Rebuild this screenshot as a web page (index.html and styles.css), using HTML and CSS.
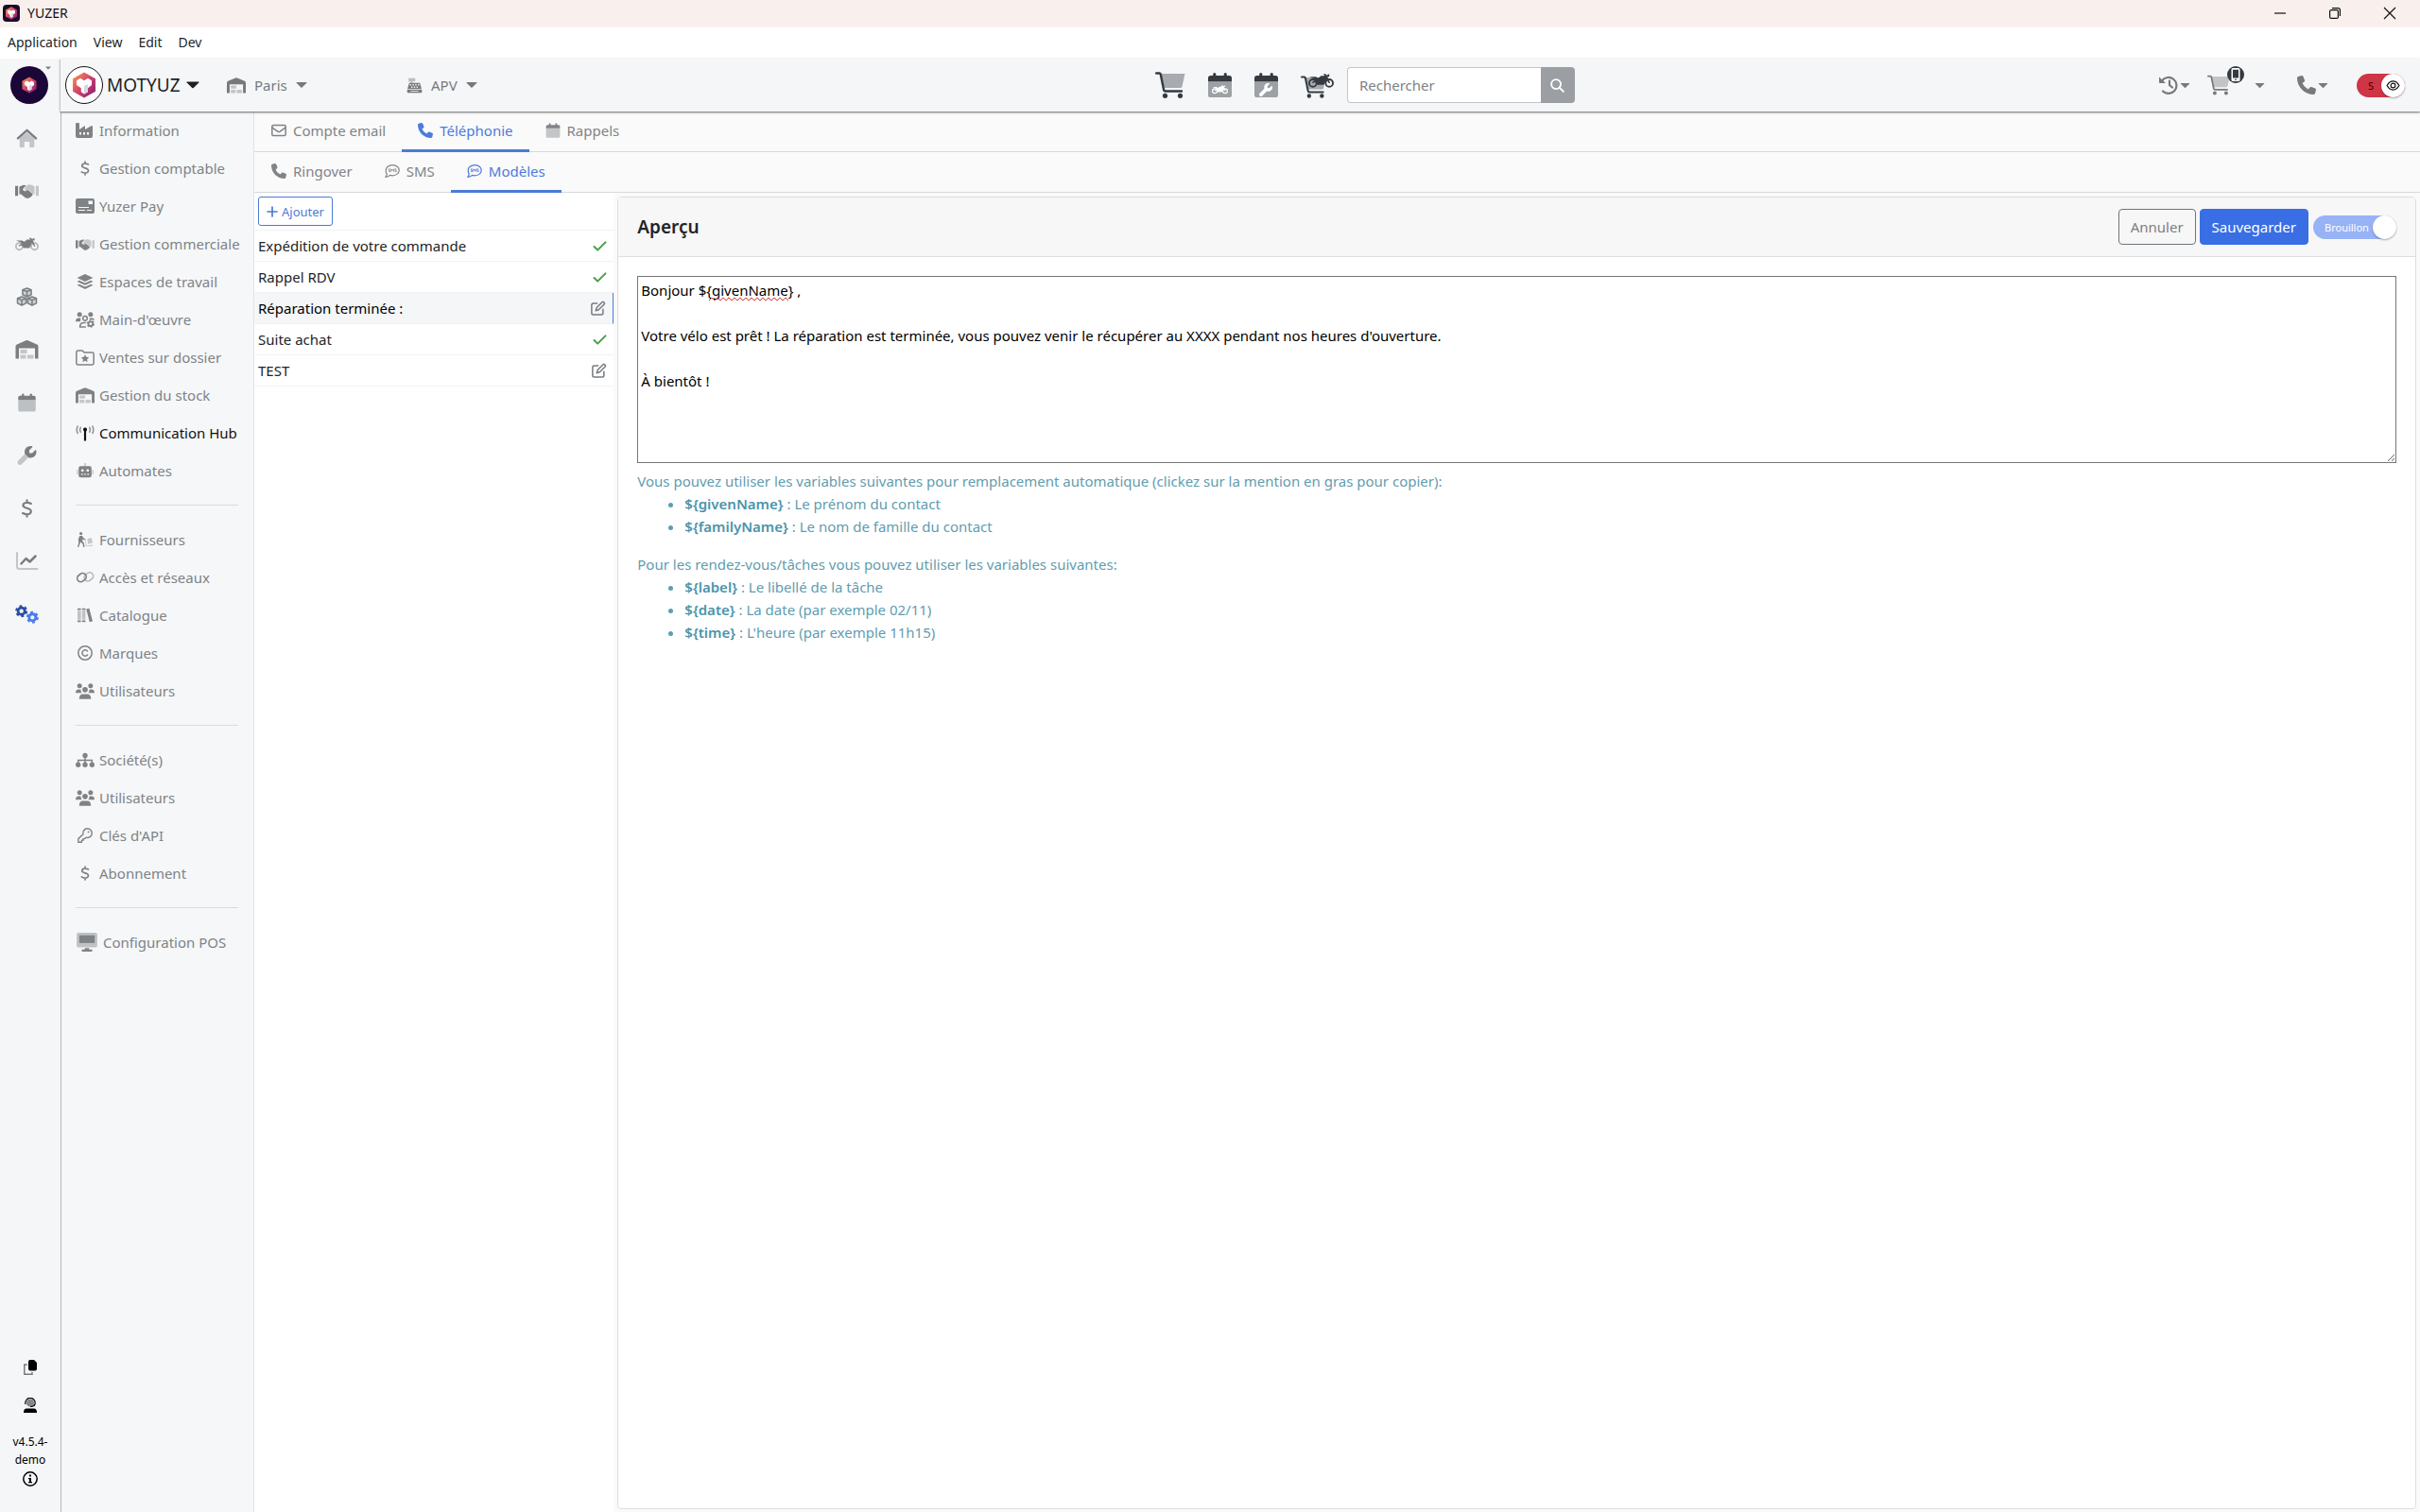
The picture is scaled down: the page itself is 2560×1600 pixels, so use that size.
FILE: index.html
```
<!DOCTYPE html>
<html lang="fr">
<head>
    <meta charset="UTF-8">
    <meta name="viewport" content="width=device-width, initial-scale=1.0">
    <title>YUZER</title>
    <link rel="stylesheet" href="styles.css">
</head>
<body>
    <!-- Icon sprite -->
    <svg class="sprite" aria-hidden="true">
        <defs>
            <linearGradient id="cube" x1="0" y1="0" x2="1" y2="1">
                <stop offset="0" stop-color="#f6a04d"/>
                <stop offset="0.45" stop-color="#d8486a"/>
                <stop offset="1" stop-color="#7d1a78"/>
            </linearGradient>
        </defs>
        <symbol id="i-logo" viewBox="0 0 40 40">
            <path fill="url(#cube)" d="M20 3l15 8.500v17L20 37 5 28.500v-17z"/>
            <path fill="#fff" d="M10 14l5-3 5 3 5-3 5 3v6l-5 4v5l-5 3-4-3v-5l-6-4z"/>
            <path fill="#ddd3dc" d="M20 21l5-2v10l-5 3z"/>
        </symbol>
        <symbol id="i-caret" viewBox="0 0 12 8"><path d="M1 1h10q1 0 .4.800L6.600 6.600q-.6.500-1.200 0L.6 1.800Q0 1 1 1z"/></symbol>
        <symbol id="i-warehouse" viewBox="0 0 24 20">
            <path d="M0 19V6.500Q0 5 1.400 4.400L11 .3q1-.4 2 0l9.600 4.100Q24 5 24 6.500V19q0 .5-.5.500H21q-.5 0-.5-.5V8.500h-17V19q0 .5-.5.500H.5Q0 19.500 0 19z"/>
            <path opacity=".4" d="M5 10h7v4H5zM5 15.500h6v4H5zM12.500 15.500h6.500v4h-6.500z"/>
        </symbol>
        <symbol id="i-register" viewBox="0 0 24 24">
            <path opacity=".45" d="M3 1h10v5H9v3H6V6H3z"/>
            <path fill-rule="evenodd" d="M4 8h16l2.500 9H1.500zM5 10v2h2v-2zm4 0v2h2v-2zm4 0v2h2v-2zm4 0v2h2v-2zM7 13.500v2h2v-2zm4 0v2h2v-2zm4 0v2h2v-2z"/>
            <path d="M1 18h22v3.500q0 1.500-1.500 1.500h-19Q1 23 1 21.500zm5 2v1h12v-1z" fill-rule="evenodd"/>
        </symbol>
        <symbol id="i-home" viewBox="0 0 24 22">
            <path opacity=".4" d="M3.500 11.500L12 4.500l8.500 7V21q0 1-1 1H15v-6.500H9V22H4.500q-1 0-1-1z"/>
            <path fill="none" stroke="currentColor" stroke-width="2.600" stroke-linecap="round" stroke-linejoin="round" d="M1.500 11.500L12 2l10.500 9.500"/>
        </symbol>
        <symbol id="i-hands" viewBox="0 0 28 18">
            <path d="M0 3h3.500v12H0zM5 4l5-2 3 .5-4 4.500q1 3 4 2l2-1.500 6 5.500-1 2-2 1.500-3 1.500-3-1-5-4H5z"/>
            <path opacity=".4" d="M13 3l3-1.500 4 .5 3 2v9h-1.500l-6-6-3 1.800-1.500-1.300zM24.500 3H28v12h-3.500z"/>
        </symbol>
        <symbol id="i-moto" viewBox="0 0 28 16">
            <g fill="none" stroke="currentColor" stroke-width="2" opacity=".5"><circle cx="5" cy="11" r="4"/><circle cx="23" cy="11" r="4"/></g>
            <path d="M1 4h7l3 1.500 3-2.500h4l-1.500-2H19l1 1.500 3-1.500v3h-2l3 7h-1.600L20 7l-3 6h-7l-2-3-4 1 1-2 3-1-2-2z"/>
        </symbol>
        <symbol id="i-moto-solid" viewBox="0 0 28 16">
            <g fill="none" stroke="currentColor" stroke-width="2"><circle cx="5" cy="11" r="4"/><circle cx="23" cy="11" r="4"/></g>
            <path d="M1 4h7l3 1.500 3-2.500h4l-1.500-2H19l1 1.500 3-1.500v3h-2l3 7h-1.600L20 7l-3 6h-7l-2-3-4 1 1-2 3-1-2-2z"/>
        </symbol>
        <symbol id="i-boxes" viewBox="0 0 24 22">
            <path opacity=".3" d="M12 1l5 2v5l-5 2.500L7 8V3zM6 11l5 2v6l-5 2.500L1 19v-6zM18 11l5 2v6l-5 2.500L13 19v-6z"/>
            <path fill="none" stroke="currentColor" stroke-width="1.700" stroke-linejoin="round" d="M12 1l5 2v5.500L12 11 7 8.500V3zM7 3l5 2 5-2M12 5v6M6 11l5 2v5.500L6 21l-5-2.500V13zM1 13l5 2 5-2M6 15v6M18 11l5 2v5.500L18 21l-5-2.500V13zM13 13l5 2 5-2M18 15v6"/>
        </symbol>
        <symbol id="i-calendar" viewBox="0 0 24 26">
            <path opacity=".45" d="M0 9.500h24V23q0 2.500-2.500 2.500h-19Q0 25.500 0 23z"/>
            <path d="M0 9.500V6q0-2.500 2.500-2.500H5V2q0-1.500 1.500-1.500T8 2v1.500h8V2q0-1.500 1.500-1.500T19 2v1.500h2.500Q24 3.500 24 6v3.500z"/>
        </symbol>
        <symbol id="i-wrench" viewBox="0 0 512 512">
            <path opacity=".4" d="M201 214L19.900 396.100C7.200 408.800 0 426.100 0 444.100 0 481.600 30.400 512 67.900 512c18 0 35.300-7.200 48-19.900L298 310c-45-15-80-50-97-96z"/>
            <path d="M352 320c88.400 0 160-71.600 160-160 0-15.300-2.200-30.100-6.200-44.200-3.100-10.800-16.400-13.200-24.300-5.300l-76.800 76.800c-3 3-7.100 4.700-11.300 4.700H336c-8.800 0-16-7.200-16-16v-57.400c0-4.200 1.700-8.300 4.700-11.300l76.800-76.800c7.900-7.900 5.400-21.200-5.300-24.300C382.100 2.200 367.300 0 352 0 263.600 0 192 71.600 192 160c0 19.100 3.400 37.500 9.500 54.500l96 96c17 6.200 35.400 9.500 54.500 9.500z"/>
        </symbol>
        <symbol id="i-wrench-solid" viewBox="0 0 512 512">
            <path d="M352 320c88.400 0 160-71.600 160-160 0-15.300-2.200-30.100-6.200-44.200-3.100-10.800-16.400-13.200-24.300-5.300l-76.800 76.800c-3 3-7.100 4.700-11.300 4.700H336c-8.800 0-16-7.200-16-16v-57.400c0-4.200 1.700-8.300 4.700-11.300l76.800-76.800c7.900-7.900 5.400-21.200-5.300-24.300C382.100 2.200 367.300 0 352 0 263.600 0 192 71.600 192 160c0 19.100 3.400 37.500 9.500 54.500L19.900 396.100C7.200 408.800 0 426.100 0 444.100 0 481.600 30.400 512 67.900 512c18 0 35.300-7.200 48-19.900l181.600-181.600c17 6.200 35.400 9.500 54.500 9.500z"/>
        </symbol>
        <symbol id="i-dollar" viewBox="0 0 14 22">
            <path fill="none" stroke="currentColor" stroke-width="2.300" stroke-linecap="round" d="M7 1.500V4m0 14v2.500M11.800 5.500C8.500 3.800 3 3.600 2.500 7.200 2.200 12 11.800 9.500 11.800 14.500 11.500 18.800 5.500 18.500 2 16.500"/>
        </symbol>
        <symbol id="i-chart" viewBox="0 0 24 20">
            <path opacity=".4" fill="none" stroke="currentColor" stroke-width="2" stroke-linecap="round" d="M1.500 1v14.500Q1.500 18 4 18h19"/>
            <path fill="none" stroke="currentColor" stroke-width="2.500" stroke-linecap="round" stroke-linejoin="round" d="M6 12.500l5-5.500 4 3.500 6-6"/>
        </symbol>
        <symbol id="i-gears" viewBox="0 0 30 24">
            <g fill="none" stroke="#2b4fa3"><circle cx="8" cy="8" r="4.300" stroke-width="3.400"/><circle cx="8" cy="8" r="6.500" stroke-width="2.600" stroke-dasharray="3.400 3.400"/></g>
            <g fill="none" stroke="#4a7be8"><circle cx="22" cy="16" r="4.300" stroke-width="3.400"/><circle cx="22" cy="16" r="6.500" stroke-width="2.600" stroke-dasharray="3.400 3.400"/></g>
        </symbol>
        <symbol id="i-industry" viewBox="0 0 20 16"><path fill-rule="evenodd" d="M0 1Q0 0 1 0h2q1 0 1 1v6l5-3.500q1-.5 1 .5v3l6-3.500q1-.5 1-.5 1 0 1 1V14q0 2-2 2H2q-2 0-2-2zm4 9v2.500h2V10zm4 0v2.500h2V10zm4 0v2.500h2V10z"/></symbol>
        <symbol id="i-card" viewBox="0 0 20 16"><path fill-rule="evenodd" d="M2 0h16q2 0 2 2v12q0 2-2 2H2q-2 0-2-2V2q0-2 2-2zm11.500 2.500v3.500H18V2.500zM3 9v1h11V9zm0 3v1h7v-1zm9 0v1h5v-1z"/></symbol>
        <symbol id="i-layers" viewBox="0 0 20 18"><path d="M10 0l9.500 4.500L10 9 .5 4.500zM3 7.500l7 3.200 7-3.200L19.500 9 10 13.300.5 9zM3 12l7 3.200 7-3.200 2.500 1.300L10 18 .5 13.300z"/></symbol>
        <symbol id="i-users" viewBox="0 0 24 20">
            <circle cx="5" cy="3" r="3"/><circle cx="19" cy="3" r="3"/><circle cx="12" cy="8" r="3.400"/>
            <path d="M0 12q0-4.500 4-4.500h2.500Q6.500 10.500 8 12zM24 12q0-4.500-4-4.500h-2.500q0 3-1.500 4.500zM4.500 20q0-6.500 5-6.500h5q5 0 5 6.500z"/>
        </symbol>
        <symbol id="i-users-cog" viewBox="0 0 24 20">
            <circle cx="5" cy="3" r="3"/><circle cx="19" cy="3" r="3"/><path d="M0 12q0-4.500 4-4.500h2.500L6 12zM24 10q0-2.500-4-2.500h-2.500l.5 2.500z"/>
            <circle cx="12" cy="8" r="2.800" fill="none" stroke="currentColor" stroke-width="1.800"/>
            <path fill="none" stroke="currentColor" stroke-width="1.800" d="M13 19H5.500q0-5.500 5-5.500H13"/>
            <circle cx="19" cy="15" r="2.800" fill="none" stroke="currentColor" stroke-width="2.200"/><circle cx="19" cy="15" r="4.300" fill="none" stroke="currentColor" stroke-width="1.400" stroke-dasharray="2.250 2.250"/>
        </symbol>
        <symbol id="i-folder-star" viewBox="0 0 24 20">
            <path fill="none" stroke="currentColor" stroke-width="1.800" d="M3 1h5.500L11 3.500h10q2 0 2 2V17q0 2-2 2H3q-2 0-2-2V3q0-2 2-2z"/>
            <path d="M12 6l1.600 3.200 3.400.5-2.500 2.500.6 3.500L12 14l-3.100 1.700.6-3.500L7 9.700l3.400-.5z"/>
        </symbol>
        <symbol id="i-tower" viewBox="0 0 24 20">
            <path d="M9.500 5.500a2.500 2.500 0 1 1 3.800 2v12h-2.600v-12z"/>
            <path opacity=".55" fill="none" stroke="#444" stroke-width="1.900" stroke-linecap="round" d="M2.500 1q-2 4.500 0 9M6.300 2.500q-1.500 3 0 6M21.500 1q2 4.500 0 9M17.700 2.500q1.500 3 0 6"/>
        </symbol>
        <symbol id="i-robot" viewBox="0 0 22 20">
            <path fill-rule="evenodd" d="M5 4h12q2.500 0 2.500 2.500v10q0 2.500-2.500 2.500H5q-2.500 0-2.500-2.500v-10Q2.500 4 5 4zm2.500 4a1.800 1.800 0 1 0 0 3.600 1.800 1.800 0 0 0 0-3.600zm7 0a1.800 1.800 0 1 0 0 3.600 1.800 1.800 0 0 0 0-3.600zM6 14v1.500h2V14zm4 0v1.500h2V14zm4 0v1.500h2V14z"/>
            <path opacity=".45" d="M10 0h2v4h-2zM0 9h1.500v6H0zM20.500 9H22v6h-1.500z"/>
        </symbol>
        <symbol id="i-dolly" viewBox="0 0 20 20">
            <circle cx="4.500" cy="2" r="2"/>
            <path d="M3 5h3l2.500 3.500 2 .5v1.500L7.500 10l-.8-1v3l2 3 .6 5H7.500L7 16l-3-3-1 3-1.500 4H0l1.500-6-.5-5z"/>
            <path opacity=".4" d="M11 19l-1-8 1-.5 1 7.500 8-1v1.500zM13 9l5.500-1.500L20 14.500l-6 1.500z"/>
        </symbol>
        <symbol id="i-link" viewBox="0 0 24 18">
            <rect x="2" y="4" width="12" height="9" rx="4.500" fill="none" stroke="currentColor" stroke-width="2" transform="rotate(-38 8 9)"/>
            <rect x="11" y="3" width="12" height="9" rx="4.500" fill="none" stroke="currentColor" stroke-width="2" opacity=".5" transform="rotate(-38 17 8)"/>
        </symbol>
        <symbol id="i-books" viewBox="0 0 20 20">
            <path opacity=".45" d="M0 4h4.500v12H0zM6 4h4.500v12H6z"/>
            <path d="M0 1h4.500v2H0zM0 17h4.500v2H0zM6 1h4.500v2H6zM6 17h4.500v2H6zM11.500 1.800l4-1L20 18l-4 1.200z"/>
        </symbol>
        <symbol id="i-copyright" viewBox="0 0 20 20">
            <circle cx="10" cy="10" r="9" fill="none" stroke="currentColor" stroke-width="1.900"/>
            <path fill="none" stroke="currentColor" stroke-width="1.900" stroke-linecap="round" d="M13.200 12.600a4 4 0 1 1 0-5.200"/>
        </symbol>
        <symbol id="i-sitemap" viewBox="0 0 24 18">
            <circle cx="12" cy="3" r="3.200"/><circle cx="3.200" cy="14.700" r="3.200"/><circle cx="12" cy="14.700" r="3.200"/><circle cx="20.800" cy="14.700" r="3.200"/>
            <path fill="none" stroke="currentColor" stroke-width="1.800" d="M12 5v8M3.200 13V9h17.600v4"/>
        </symbol>
        <symbol id="i-key" viewBox="0 0 20 20">
            <path fill="none" stroke="currentColor" stroke-width="1.800" stroke-linejoin="round" d="M13 1a6 6 0 1 1-1.800 11.700L9.500 14.500H7.500v2h-2V19H1v-4.500l6.400-6A6 6 0 0 1 13 1z"/>
            <circle cx="14.500" cy="5.500" r="1.200"/>
        </symbol>
        <symbol id="i-screen" viewBox="0 0 24 22">
            <rect width="24" height="17" rx="2" opacity=".45"/><rect x="3" y="3" width="18" height="9"/><path d="M9.500 18h5v1.500H18V22H6v-2.500h3.500z"/>
        </symbol>
        <symbol id="i-mail" viewBox="0 0 20 16">
            <rect x="1" y="1" width="18" height="14" rx="2" fill="none" stroke="currentColor" stroke-width="1.900"/>
            <path fill="none" stroke="currentColor" stroke-width="1.900" d="M1 4l7.500 5.500q1.500 1 3 0L19 4"/>
        </symbol>
        <symbol id="i-phone" viewBox="0 0 512 512"><path d="M164.900 24.600c-7.700-18.600-28-28.500-47.400-23.200l-88 24C12.100 30.200 0 46 0 64c0 247.400 200.600 448 448 448 18 0 33.800-12.100 38.600-29.500l24-88c5.300-19.400-4.600-39.700-23.200-47.400l-96-40c-16.300-6.800-35.200-2.100-46.300 11.600L304.700 368C234.300 334.700 177.300 277.700 144 207.300l49.300-40.300c13.700-11.200 18.400-30 11.600-46.300l-40-96z"/></symbol>
        <symbol id="i-sms" viewBox="0 0 20 18">
            <path fill="none" stroke="currentColor" stroke-width="1.500" stroke-linejoin="round" d="M10.300 1c5 0 8.700 3.200 8.700 7s-3.700 7-8.700 7q-1.800 0-3.300-.5Q4.500 16.800 1 17q1.700-2 1.800-4.200Q1.500 11 1.500 8c0-3.800 3.800-7 8.800-7z"/>
            <path fill="none" stroke="currentColor" stroke-width="1" d="M7 6.300H5.300v1.600H7v1.800H5M8.500 10V6.300l1.600 2 1.600-2V10M15.200 6.300h-1.700v1.600h1.700v1.800h-2"/>
        </symbol>
        <symbol id="i-plus" viewBox="0 0 12 12"><path fill="none" stroke="currentColor" stroke-width="1.700" stroke-linecap="round" d="M6 1v10M1 6h10"/></symbol>
        <symbol id="i-check" viewBox="0 0 16 12"><path fill="none" stroke="currentColor" stroke-width="2.200" stroke-linecap="round" stroke-linejoin="round" d="M1.500 6.500l4 4 9-9"/></symbol>
        <symbol id="i-edit" viewBox="0 0 18 18">
            <path fill="none" stroke="currentColor" stroke-width="1.700" stroke-linecap="round" stroke-linejoin="round" d="M7.500 3.500H3q-2 0-2 2V15q0 2 2 2h9.500q2 0 2-2v-4.500M7 8.500l6.500-6.500q1-1 2.200.200t.2 2.200L9.400 11 6 12z"/>
        </symbol>
        <symbol id="i-cart" viewBox="0 0 32 28">
            <path opacity=".4" d="M6 2h25.500l-3 13.500q-.4 1.500-2 1.500H9.500z"/>
            <path fill="none" stroke="currentColor" stroke-width="2.400" stroke-linecap="round" stroke-linejoin="round" d="M1.200 1.500h3.300q1 0 1.300 1.300l3.200 15.700q.3 2 2 2h17"/>
            <circle cx="10.500" cy="25.300" r="2.600"/><circle cx="26.500" cy="25.300" r="2.600"/>
        </symbol>
        <symbol id="i-search" viewBox="0 0 16 16"><path fill="none" stroke="currentColor" stroke-width="2" stroke-linecap="round" d="M6.500 1.200a5.300 5.300 0 1 1 0 10.600 5.300 5.300 0 0 1 0-10.600zM10.500 10.500l4.300 4.300"/></symbol>
        <symbol id="i-history" viewBox="0 0 20 20">
            <path fill="none" stroke="currentColor" stroke-width="2.200" stroke-linecap="round" d="M3 5.500a8.500 8.500 0 1 1 1 11M11 5.500V10l3 2.500"/>
            <path d="M0 1.500l7 6.500H1Q0 8 0 7z"/>
        </symbol>
        <symbol id="i-eye" viewBox="0 0 16 12">
            <path fill="none" stroke="#111" stroke-width="1.300" d="M1 6q2.800-5 7-5t7 5q-2.800 5-7 5T1 6z"/><circle cx="8" cy="6" r="2.600" fill="none" stroke="#111" stroke-width="1.300"/>
        </symbol>
        <symbol id="i-copy" viewBox="0 0 14 16"><path d="M7 0h4l3 3v6.500q0 2-2 2H7q-2 0-2-2V2q0-2 2-2z"/><path opacity=".5" fill="none" stroke="currentColor" stroke-width="1.500" d="M4 5H.8v10.200H9V13"/></symbol>
        <symbol id="i-support" viewBox="0 0 14 16"><circle cx="7" cy="5.500" r="4" opacity=".45"/><path fill="none" stroke="currentColor" stroke-width="1.200" d="M1.800 7V5.500a5.200 5.200 0 0 1 10.400 0q0 4-5.200 4"/><path d="M0 16q0-4.500 3-4.500h8q3 0 3 4.500z"/></symbol>
        <symbol id="i-info" viewBox="0 0 16 16"><circle cx="8" cy="8" r="7.200" fill="none" stroke="currentColor" stroke-width="1.500"/><path d="M7 3.500h2v2H7zM6 7h3v4h1v1.300H6V11h1V8.300H6z"/></symbol>
    </svg>

    <header class="titlebar">
        <span class="app-icon"><svg><use href="#i-logo"/></svg></span>
        <span class="app-name">YUZER</span>
        <div class="window-buttons">
            <button type="button" aria-label="Réduire"><svg viewBox="0 0 12 12"><path d="M0 6h12"/></svg></button>
            <button type="button" aria-label="Restaurer"><svg viewBox="0 0 12 12"><rect x=".6" y="2.600" width="8.800" height="8.800" rx="1.500"/><path d="M3 .6h6.400q2 0 2 2V9"/></svg></button>
            <button type="button" aria-label="Fermer"><svg viewBox="0 0 12 12"><path d="M0 0l12 12M12 0L0 12"/></svg></button>
        </div>
    </header>

    <nav class="menubar">
        <button type="button">Application</button>
        <button type="button">View</button>
        <button type="button">Edit</button>
        <button type="button">Dev</button>
    </nav>

    <div class="app">
        <aside class="rail">
            <button type="button" class="rail-logo" aria-label="Yuzer">
                <svg><use href="#i-logo"/></svg>
            </button>
            <svg class="rail-caret"><use href="#i-caret"/></svg>
            <nav class="rail-nav">
                <a href="#" aria-label="Accueil"><svg><use href="#i-home"/></svg></a>
                <a href="#" aria-label="Commercial"><svg><use href="#i-hands"/></svg></a>
                <a href="#" aria-label="Véhicules"><svg><use href="#i-moto"/></svg></a>
                <a href="#" aria-label="Produits"><svg><use href="#i-boxes"/></svg></a>
                <a href="#" aria-label="Stock"><svg><use href="#i-warehouse"/></svg></a>
                <a href="#" aria-label="Agenda"><svg><use href="#i-calendar"/></svg></a>
                <a href="#" aria-label="Atelier"><svg><use href="#i-wrench"/></svg></a>
                <a href="#" aria-label="Comptabilité"><svg><use href="#i-dollar"/></svg></a>
                <a href="#" aria-label="Statistiques"><svg><use href="#i-chart"/></svg></a>
                <a href="#" aria-label="Configuration"><svg><use href="#i-gears"/></svg></a>
            </nav>
            <div class="rail-foot">
                <button type="button" aria-label="Copier"><svg><use href="#i-copy"/></svg></button>
                <button type="button" aria-label="Support"><svg><use href="#i-support"/></svg></button>
                <span class="version">v4.5.4-demo</span>
                <svg><use href="#i-info"/></svg>
            </div>
        </aside>

        <div class="workspace">
            <div class="topbar">
                <div class="top-left">
                    <button type="button" class="company">
                        <span class="company-logo"><svg><use href="#i-logo"/></svg></span>
                        MOTYUZ
                        <svg class="caret"><use href="#i-caret"/></svg>
                    </button>
                    <label class="picker">
                        <svg class="picker-icon"><use href="#i-warehouse"/></svg>
                        <select aria-label="Site"><option>Paris</option></select>
                        <svg class="caret"><use href="#i-caret"/></svg>
                    </label>
                    <label class="picker register">
                        <svg class="picker-icon"><use href="#i-register"/></svg>
                        <select aria-label="Caisse"><option>APV</option></select>
                        <svg class="caret"><use href="#i-caret"/></svg>
                    </label>
                </div>

                <div class="top-center">
                    <div class="quick">
                        <button type="button" aria-label="Nouvelle vente"><svg class="q-cart"><use href="#i-cart"/></svg></button>
                        <button type="button" aria-label="Rendez-vous véhicule"><svg class="q-cal"><use href="#i-calendar"/><use class="on-cal" href="#i-moto-solid" x="4" y="13" width="17" height="11"/></svg></button>
                        <button type="button" aria-label="Rendez-vous atelier"><svg class="q-cal"><use href="#i-calendar"/><use class="on-cal" href="#i-wrench-solid" x="5" y="12" width="14" height="14"/></svg></button>
                        <button type="button" aria-label="Vente véhicule"><svg class="q-moto"><use href="#i-cart" x="0" y="4" width="27" height="24"/><use href="#i-moto-solid" x="8" y="1" width="27" height="16"/></svg></button>
                    </div>
                    <form class="search">
                        <input type="text" placeholder="Rechercher" aria-label="Rechercher">
                        <button type="button" aria-label="Lancer la recherche"><svg><use href="#i-search"/></svg></button>
                    </form>
                </div>

                <div class="top-right">
                    <button type="button" aria-label="Historique"><svg class="tool"><use href="#i-history"/></svg><svg class="caret"><use href="#i-caret"/></svg></button>
                    <button type="button" class="basket" aria-label="Panier">
                        <svg class="tool-cart"><use href="#i-cart"/></svg>
                        <span class="badge"><svg viewBox="0 0 18 18"><path fill-rule="evenodd" d="M6 2h6q1.500 0 1.500 1.500v11q0 1.500-1.500 1.500H6q-1.500 0-1.500-1.500v-11Q4.500 2 6 2zm0 1.800v8.700h6V3.800zM8.300 13.500V15h1.400v-1.500z"/></svg></span>
                        <svg class="caret"><use href="#i-caret"/></svg>
                    </button>
                    <button type="button" aria-label="Téléphone"><svg class="tool"><use href="#i-phone"/></svg><svg class="caret"><use href="#i-caret"/></svg></button>
                    <label class="switch presence">
                        <input type="checkbox" checked>
                        <span class="switch-text">S</span>
                        <svg class="eye"><use href="#i-eye"/></svg>
                    </label>
                </div>
            </div>

            <div class="body">
                <nav class="sidebar">
                    <a href="#"><svg><use href="#i-industry"/></svg>Information</a>
                    <a href="#"><svg><use href="#i-dollar"/></svg>Gestion comptable</a>
                    <a href="#"><svg><use href="#i-card"/></svg>Yuzer Pay</a>
                    <a href="#"><svg class="wide"><use href="#i-hands"/></svg>Gestion commerciale</a>
                    <a href="#"><svg><use href="#i-layers"/></svg>Espaces de travail</a>
                    <a href="#"><svg class="wide"><use href="#i-users-cog"/></svg>Main-d'œuvre</a>
                    <a href="#"><svg class="wide"><use href="#i-folder-star"/></svg>Ventes sur dossier</a>
                    <a href="#"><svg class="wide"><use href="#i-warehouse"/></svg>Gestion du stock</a>
                    <a href="#" class="current"><svg class="wide"><use href="#i-tower"/></svg>Communication Hub</a>
                    <a href="#"><svg><use href="#i-robot"/></svg>Automates</a>
                    <hr>
                    <a href="#"><svg><use href="#i-dolly"/></svg>Fournisseurs</a>
                    <a href="#"><svg class="wide"><use href="#i-link"/></svg>Accès et réseaux</a>
                    <a href="#"><svg><use href="#i-books"/></svg>Catalogue</a>
                    <a href="#"><svg><use href="#i-copyright"/></svg>Marques</a>
                    <a href="#"><svg class="wide"><use href="#i-users"/></svg>Utilisateurs</a>
                    <hr>
                    <a href="#"><svg class="wide"><use href="#i-sitemap"/></svg>Société(s)</a>
                    <a href="#"><svg class="wide"><use href="#i-users"/></svg>Utilisateurs</a>
                    <a href="#"><svg><use href="#i-key"/></svg>Clés d'API</a>
                    <a href="#"><svg><use href="#i-dollar"/></svg>Abonnement</a>
                    <hr>
                    <a href="#"><svg class="screen"><use href="#i-screen"/></svg>Configuration POS</a>
                </nav>

                <main class="content">
                    <nav class="tabs">
                        <a href="#"><svg><use href="#i-mail"/></svg>Compte email</a>
                        <a href="#" class="active"><svg><use href="#i-phone"/></svg>Téléphonie</a>
                        <a href="#"><svg><use href="#i-calendar"/></svg>Rappels</a>
                    </nav>
                    <nav class="tabs">
                        <a href="#"><svg><use href="#i-phone"/></svg>Ringover</a>
                        <a href="#"><svg><use href="#i-sms"/></svg>SMS</a>
                        <a href="#" class="active"><svg><use href="#i-sms"/></svg>Modèles</a>
                    </nav>

                    <div class="split">
                        <section class="templates">
                            <button type="button" class="btn-add"><svg><use href="#i-plus"/></svg>Ajouter</button>
                            <ul>
                                <li><button type="button">Expédition de votre commande<svg class="ok"><use href="#i-check"/></svg></button></li>
                                <li><button type="button">Rappel RDV<svg class="ok"><use href="#i-check"/></svg></button></li>
                                <li class="selected"><button type="button">Réparation terminée :<svg class="draft"><use href="#i-edit"/></svg></button></li>
                                <li><button type="button">Suite achat<svg class="ok"><use href="#i-check"/></svg></button></li>
                                <li><button type="button">TEST<svg class="draft"><use href="#i-edit"/></svg></button></li>
                            </ul>
                        </section>

                        <section class="card">
                            <div class="card-header">
                                <h1>Aperçu</h1>
                                <button type="button" class="btn btn-outline">Annuler</button>
                                <button type="button" class="btn btn-primary">Sauvegarder</button>
                                <label class="switch state">
                                    <input type="checkbox" checked>
                                    <span class="switch-text">Brouillon</span>
                                </label>
                            </div>
                            <div class="card-body">
                                <div class="editor">
                                    <textarea rows="8" aria-label="Message" spellcheck="false">Bonjour ${givenName} ,

Votre vélo est prêt ! La réparation est terminée, vous pouvez venir le récupérer au XXXX pendant nos heures d'ouverture.

À bientôt !</textarea>
                                    <svg class="squiggle"><path d="M0 4l3-3 3 3 3-3 3 3 3-3 3 3 3-3 3 3 3-3 3 3 3-3 3 3 3-3 3 3 3-3 3 3 3-3 3 3 3-3 3 3 3-3 3 3 3-3 3 3 3-3 3 3 3-3 3 3"/></svg>
                                </div>
                                <div class="help">
                                    Vous pouvez utiliser les variables suivantes pour remplacement automatique (clickez sur la mention en gras pour copier):
                                    <ul>
                                        <li><b>${givenName}</b> : Le prénom du contact</li>
                                        <li><b>${familyName}</b> : Le nom de famille du contact</li>
                                    </ul>
                                    Pour les rendez-vous/tâches vous pouvez utiliser les variables suivantes:
                                    <ul>
                                        <li><b>${label}</b> : Le libellé de la tâche</li>
                                        <li><b>${date}</b> : La date (par exemple 02/11)</li>
                                        <li><b>${time}</b> : L'heure (par exemple 11h15)</li>
                                    </ul>
                                </div>
                            </div>
                        </section>
                    </div>
                </main>
            </div>
        </div>
    </div>
</body>
</html>
```
FILE: styles.css
```
* {
    box-sizing: border-box;
}

body {
    margin: 0;
    height: 100vh;
    display: flex;
    flex-direction: column;
    overflow: hidden;
    font-family: "Noto Sans", "Open Sans", sans-serif;
    font-size: 15px;
    line-height: 24px;
    color: #212529;
    background-color: #fff;
}

button,
input,
select,
textarea {
    font: inherit;
    color: inherit;
}

button {
    padding: 0;
    border: none;
    background: none;
    cursor: pointer;
}

a {
    color: inherit;
    text-decoration: none;
}

svg {
    display: block;
    flex: none;
    fill: currentColor;
}

.sprite {
    position: absolute;
    width: 0;
    height: 0;
}

.caret {
    width: 12px;
    height: 8px;
}

/* window frame */
.titlebar {
    display: flex;
    align-items: center;
    height: 29px;
    padding: 0 26px 1px 3px;
    background-color: #f9f0ee;
    font-size: 14px;
    color: #111;
}

.app-icon {
    width: 18px;
    height: 18px;
    margin-right: 8px;
    padding: 1px;
    border-radius: 4px;
    background-color: #1c0c2c;
}

.app-icon svg {
    width: 16px;
    height: 16px;
}

.window-buttons {
    display: flex;
    gap: 46px;
    margin-left: auto;
}

.window-buttons svg {
    width: 12px;
    height: 12px;
    overflow: visible;
    fill: none;
    stroke: #111;
    stroke-width: 1.2;
}

.menubar {
    display: flex;
    align-items: center;
    gap: 17px;
    height: 33px;
    padding: 0 8px 2px;
    font-size: 14px;
}

.app {
    display: flex;
    flex: 1;
    min-height: 0;
}

/* icon rail */
.rail {
    position: relative;
    display: flex;
    flex-direction: column;
    flex: none;
    width: 64px;
    background-color: #f4f6f8;
    color: #7b7e80;
}

.rail-logo {
    width: 40px;
    height: 40px;
    margin: 8px 0 8px 11px;
    padding: 10px;
    border-radius: 50%;
    background-color: #1b0638;
}

.rail-logo svg {
    width: 20px;
    height: 20px;
}

.rail-caret {
    position: absolute;
    top: 8px;
    left: 47px;
    width: 8px;
    height: 4px;
}

.rail-nav {
    padding-right: 8px;
}

.rail-nav a {
    display: flex;
    align-items: center;
    justify-content: center;
    height: 56px;
}

.rail-nav svg {
    width: 25px;
    height: 20px;
}

.rail-foot {
    display: flex;
    flex-direction: column;
    align-items: center;
    margin-top: auto;
    padding-bottom: 27px;
    color: #000;
}

.rail-foot svg {
    width: 16px;
    height: 16px;
}

.rail-foot button {
    height: 40px;
}

.version {
    width: 48px;
    margin: 9px 0 3px;
    font-size: 12px;
    line-height: 19px;
    text-align: center;
}

.workspace {
    display: flex;
    flex-direction: column;
    flex: 1;
    min-width: 0;
}

/* top bar */
.topbar {
    position: relative;
    z-index: 1;
    display: flex;
    align-items: center;
    justify-content: space-between;
    height: 56px;
    padding: 0 16px 0 5px;
    background-color: #f4f6f8;
    box-shadow: 0 1px 2px rgba(0, 0, 0, 0.6);
    color: #777a7c;
}

.top-left,
.top-center,
.top-right {
    display: flex;
    align-items: center;
}

.company {
    display: flex;
    align-items: center;
    gap: 4px;
    width: 171px;
    font-size: 19px;
    color: #1d1f21;
}

.company .caret {
    width: 14px;
    height: 10px;
    margin-left: 2px;
}

.company-logo {
    padding: 3px;
    border: 1px solid #111;
    border-radius: 50%;
    background-color: #fff;
}

.company-logo svg {
    width: 32px;
    height: 32px;
}

.picker {
    display: flex;
    align-items: center;
    gap: 9px;
    width: 190px;
}

.picker-icon {
    width: 20px;
    height: 17px;
}

.register {
    width: 174px;
}

.register .picker-icon {
    width: 17px;
}

.picker select {
    padding: 0;
    border: none;
    appearance: none;
    background: none;
}

.quick {
    display: flex;
    align-items: center;
    gap: 24px;
    margin-right: 14px;
    color: #343a40;
}

.q-cart {
    width: 32px;
    height: 28px;
}

.q-cal {
    width: 25px;
    height: 28px;
}

.on-cal {
    color: #fff;
}

.q-moto {
    width: 35px;
    height: 28px;
}

.search {
    display: flex;
    height: 38px;
}

.search input {
    width: 205px;
    padding: 0 12px;
    border: 1px solid #c3c7ca;
    border-right: none;
    border-radius: 4px 0 0 4px;
    background-color: #fff;
}

.search input::placeholder {
    color: #7c8288;
}

.search button {
    width: 36px;
    padding-left: 10px;
    border-radius: 0 4px 4px 0;
    background-color: #9b9fa3;
    color: #fff;
}

.search svg {
    width: 15px;
    height: 15px;
}

.top-right button {
    display: flex;
    align-items: center;
    gap: 2px;
}

.tool {
    width: 20px;
    height: 20px;
}

.top-right .caret {
    width: 11px;
    height: 7px;
}

.top-right .basket {
    position: relative;
    margin: 0 34px 0 18px;
    gap: 26px;
}

.tool-cart {
    width: 24px;
    height: 24px;
}

.badge {
    position: absolute;
    top: -8px;
    left: 21px;
    border-radius: 50%;
    background-color: #343a40;
    color: #fff;
}

.badge svg {
    width: 18px;
    height: 18px;
}

/* pill switches */
.switch {
    position: relative;
    display: block;
    height: 25px;
}

.switch input {
    display: block;
    width: 100%;
    height: 25px;
    margin: 0;
    border-radius: 13px;
    appearance: none;
}

.switch input::after {
    content: "";
    display: block;
    width: 25px;
    height: 25px;
    margin-left: auto;
    border-radius: 50%;
    background-color: #fff;
    box-shadow: 0 1px 2px rgba(0, 0, 0, 0.3);
}

.switch-text {
    position: absolute;
    top: 0;
    left: 12px;
    font-size: 11px;
    line-height: 25px;
}

.presence {
    width: 51px;
    margin-left: 30px;
}

.presence input {
    background-color: #d03545;
}

.presence .switch-text {
    color: #300;
}

.eye {
    position: absolute;
    top: 7px;
    right: 5px;
    width: 15px;
    height: 11px;
}

.state {
    width: 88px;
    margin-left: 1px;
}

.state input {
    background-color: #97b3f6;
}

.state .switch-text {
    color: #fff;
}

/* page body */
.body {
    display: flex;
    flex: 1;
    min-height: 0;
}

.sidebar {
    flex: none;
    width: 205px;
    padding: 0 16px 0 15px;
    border-left: 1px solid #b4b8ba;
    border-right: 1px solid #e2e4e6;
    background-color: #f5f7f9;
    color: #808385;
}

.sidebar a {
    display: flex;
    align-items: center;
    gap: 5px;
    height: 40px;
    white-space: nowrap;
}

.sidebar svg {
    width: 20px;
    height: 16px;
}

.sidebar .wide {
    height: 17px;
}

.sidebar .screen {
    width: 24px;
    height: 20px;
}

.sidebar .current {
    color: #111;
}

.sidebar hr {
    margin: 16px 0;
    border: none;
    border-top: 1px solid #d9dbdd;
}

.content {
    display: flex;
    flex-direction: column;
    flex: 1;
    min-width: 0;
}

.tabs {
    display: flex;
    height: 43px;
    padding-left: 1px;
    border-bottom: 1px solid #d6d8db;
    background-color: #fafafa;
    color: #808488;
}

.tabs a {
    display: flex;
    align-items: center;
    gap: 7px;
    height: 43px;
    padding: 0 17px;
    border-bottom: 3px solid transparent;
}

.tabs svg {
    width: 16px;
    height: 16px;
}

.tabs .active {
    border-bottom-color: #4b7bd6;
    color: #4b7bdc;
}

.split {
    display: flex;
    flex: 1;
    min-height: 0;
    background-color: #fafafa;
}

.templates {
    flex: 0 0 16.6%;
    background-color: #fff;
}

.btn-add {
    display: flex;
    align-items: center;
    gap: 4px;
    height: 31px;
    margin: 4px;
    padding: 0 8px;
    border: 1px solid #4b7bd6;
    border-radius: 3px;
    font-size: 13px;
    color: #4b7bd6;
}

.btn-add svg {
    width: 12px;
    height: 12px;
}

.templates ul {
    margin: 0;
    padding: 0;
    list-style: none;
    border-top: 1px solid #f2f2f3;
}

.templates li {
    border-bottom: 1px solid #f2f2f3;
}

.templates li button {
    display: flex;
    align-items: center;
    justify-content: space-between;
    width: 100%;
    height: 32px;
    padding: 0 7px 0 4px;
    text-align: left;
}

.templates .selected {
    border-right: 1px solid #4b7bd6;
    background-color: #f4f6f8;
    color: #000;
}

.ok {
    width: 15px;
    height: 11px;
    color: #46a04b;
}

.draft {
    width: 16px;
    height: 16px;
    color: #777b80;
}

.card {
    flex: 1;
    min-width: 0;
    margin: 4px 4px 3px;
    border: 1px solid #dcdddf;
    border-radius: 4px;
    background-color: #fff;
}

.card-header {
    display: flex;
    align-items: center;
    gap: 4px;
    height: 63px;
    padding: 0 20px;
    border-bottom: 1px solid #dcdddf;
    background-color: #f7f7f7;
}

.card-header h1 {
    flex: 1;
    margin: 0;
    font-size: 19px;
    font-weight: 600;
}

.btn {
    height: 38px;
    padding: 0 12px;
    border: 1px solid #6c757d;
    border-radius: 4px;
}

.btn-outline {
    color: #7a8086;
}

.btn-primary {
    border-color: #396ee4;
    background-color: #396ee4;
    color: #fff;
}

.card-body {
    padding: 20px;
}

.editor {
    position: relative;
}

.editor textarea {
    display: block;
    width: 100%;
    padding: 2px 3px;
    border: 1px solid #767676;
    background-color: #fff;
    color: #000;
}

.squiggle {
    position: absolute;
    top: 22px;
    left: 76px;
    width: 84px;
    height: 5px;
    fill: none;
    stroke: #d23b3b;
}

.help {
    margin-top: 7px;
    color: #5f9db0;
}

.help ul {
    margin: 0 0 16px;
    padding-left: 50px;
}

.help b {
    font-weight: 600;
    color: #4a94ab;
}
```
